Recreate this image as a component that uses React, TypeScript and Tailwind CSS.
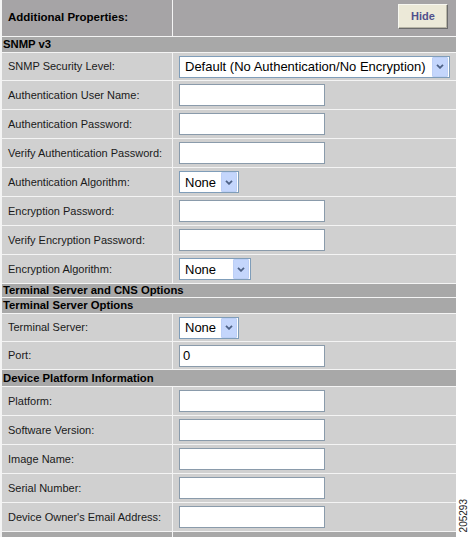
import React from "react";

const Chevron = () => (
  <svg width="8" height="5" viewBox="0 0 8 5">
    <polyline points="1,0.8 4,3.8 7,0.8" fill="none" stroke="#4d6185" strokeWidth="1.8" />
  </svg>
);

const Select = ({ value, width }: { value: string; width: string }) => (
  <div className={`flex h-[22px] ${width} items-center justify-between border border-[#7f9db9] bg-white`}>
    <span className="pl-[5px] text-[13px] leading-none text-black">{value}</span>
    <span className="mr-px flex h-[20px] w-[16px] items-center justify-center rounded-[1px] border border-[#bccff6] bg-[#c4d6fc]">
      <Chevron />
    </span>
  </div>
);

const TextBox = ({ value = "" }: { value?: string }) => (
  <div className="flex h-[22px] w-[146px] items-center border border-[#8a9bab] bg-white pl-[3px] text-[13px] text-black">
    {value}
  </div>
);

const Section = ({ title, h }: { title: string; h: string }) => (
  <div className={`flex ${h} items-center bg-[#a8a8a8] pl-[1px] text-[11.3px] font-bold text-black`}>{title}</div>
);

const Field = ({ label, h, children }: { label: string; h: string; children: React.ReactNode }) => (
  <div className={`grid ${h} grid-cols-[170px_283px] gap-x-px`}>
    <div className="flex items-center bg-[#d0d0d0] pl-[6px] text-[11px] text-[#1a1a1a]">{label}</div>
    <div className="flex items-center bg-[#d0d0d0] pl-[6px]">{children}</div>
  </div>
);

export default function App() {
  return (
    <div className="relative h-[537px] w-[471px] overflow-hidden bg-white font-['Liberation_Sans',Arial,sans-serif]">
      <div className="flex w-[456px] flex-col gap-y-px bg-[#f4f4f4] pl-[2px]">
        <div className="grid h-[36px] grid-cols-[170px_283px] gap-x-px">
          <div className="flex items-center bg-[#a6a4a6] pl-[6px] text-[11.5px] font-bold text-black">
            Additional Properties:
          </div>
          <div className="flex justify-end bg-[#a6a4a6] pr-[8px] pt-[4px]">
            <button className="h-[25px] w-[50px] border border-[#6b6b6b] border-t-[#f7f7f0] border-l-[#f7f7f0] bg-[#ece9d8] text-[11px] font-bold text-[#50508c] shadow-[inset_-1px_-1px_0_#b8b5a6]">
              Hide
            </button>
          </div>
        </div>

        <Section title="SNMP v3" h="h-[15px]" />
        <Field label="SNMP Security Level:" h="h-[27px]">
          <Select value="Default (No Authentication/No Encryption)" width="w-[271px]" />
        </Field>
        <Field label="Authentication User Name:" h="h-[28px]">
          <TextBox />
        </Field>
        <Field label="Authentication Password:" h="h-[28px]">
          <TextBox />
        </Field>
        <Field label="Verify Authentication Password:" h="h-[28px]">
          <TextBox />
        </Field>
        <Field label="Authentication Algorithm:" h="h-[28px]">
          <Select value="None" width="w-[60px]" />
        </Field>
        <Field label="Encryption Password:" h="h-[28px]">
          <TextBox />
        </Field>
        <Field label="Verify Encryption Password:" h="h-[28px]">
          <TextBox />
        </Field>
        <Field label="Encryption Algorithm:" h="h-[28px]">
          <Select value="None" width="w-[72px]" />
        </Field>

        <Section title="Terminal Server and CNS Options" h="h-[13px]" />
        <Section title="Terminal Server Options" h="h-[15px]" />
        <Field label="Terminal Server:" h="h-[27px]">
          <Select value="None" width="w-[60px]" />
        </Field>
        <Field label="Port:" h="h-[27px]">
          <TextBox value="0" />
        </Field>

        <Section title="Device Platform Information" h="h-[16px]" />
        <Field label="Platform:" h="h-[28px]">
          <TextBox />
        </Field>
        <Field label="Software Version:" h="h-[28px]">
          <TextBox />
        </Field>
        <Field label="Image Name:" h="h-[28px]">
          <TextBox />
        </Field>
        <Field label="Serial Number:" h="h-[28px]">
          <TextBox />
        </Field>
        <Field label="Device Owner's Email Address:" h="h-[28px]">
          <TextBox />
        </Field>
        <div className="grid h-[20px] grid-cols-[170px_283px] gap-x-px">
          <div className="bg-[#a8a8a8]" />
          <div className="bg-[#a8a8a8]" />
        </div>
      </div>

      <div className="absolute left-[459px] top-[499px] rotate-180 text-[10px] leading-none text-[#222] [writing-mode:vertical-rl]">
        205293
      </div>
    </div>
  );
}
